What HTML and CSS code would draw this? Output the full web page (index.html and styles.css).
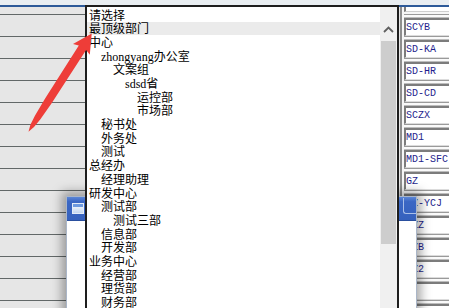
FILE: index.html
```html
<!DOCTYPE html>
<html>
  <head>
    <meta charset="UTF-8">
    <title>部门选择</title>
    <link rel="stylesheet" href="styles.css">
  </head>
  <body>
    <div id="screen">
      <div class="top-strip"></div>
      <div class="blue-line"></div>

      <div class="grid">
        <div class="row lead">
          <div class="cell-left"></div>
          <div class="cell-right"><div class="code-tail"></div></div>
        </div>
        <div class="row"><div class="cell-left"></div><div class="cell-right"><div class="groove"></div><div class="code">SCYB</div></div></div>
        <div class="row"><div class="cell-left"></div><div class="cell-right"><div class="groove"></div><div class="code">SD-KA</div></div></div>
        <div class="row"><div class="cell-left"></div><div class="cell-right"><div class="groove"></div><div class="code">SD-HR</div></div></div>
        <div class="row"><div class="cell-left"></div><div class="cell-right"><div class="groove"></div><div class="code">SD-CD</div></div></div>
        <div class="row"><div class="cell-left"></div><div class="cell-right"><div class="groove"></div><div class="code">SCZX</div></div></div>
        <div class="row"><div class="cell-left"></div><div class="cell-right"><div class="groove"></div><div class="code">MD1</div></div></div>
        <div class="row"><div class="cell-left"></div><div class="cell-right"><div class="groove"></div><div class="code">MD1-SFC</div></div></div>
        <div class="row"><div class="cell-left"></div><div class="cell-right"><div class="groove"></div><div class="code">GZ</div></div></div>
        <div class="row"><div class="cell-left"></div><div class="cell-right"><div class="groove"></div><div class="code">GZ-YCJ</div></div></div>
        <div class="row"><div class="cell-left"></div><div class="cell-right"><div class="groove"></div><div class="code">SZZ</div></div></div>
        <div class="row"><div class="cell-left"></div><div class="cell-right"><div class="groove"></div><div class="code">SZB</div></div></div>
        <div class="row"><div class="cell-left"></div><div class="cell-right"><div class="groove"></div><div class="code">SZ2</div></div></div>
        <div class="row"><div class="cell-left"></div><div class="cell-right"><div class="groove"></div><div class="code"></div></div></div>
        <div class="row"><div class="cell-left"></div><div class="cell-right"><div class="groove"></div><div class="code"></div></div></div>
      </div>

      <!-- dialog window lying under the open dropdown -->
      <div class="dialog">
        <div class="dialog-title">
          <div class="app-icon"><div class="app-icon-bar"></div></div>
          <div class="flex-grow-1"></div>
          <div class="title-btn"></div>
        </div>
        <div class="dialog-body"></div>
      </div>

      <!-- open select list -->
      <div class="dropdown">
        <ul class="dd-list">
          <li class="lvl0">请选择</li>
          <li class="lvl0 hover">最顶级部门</li>
          <li class="lvl0">中心</li>
          <li class="lvl1">zhongyang办公室</li>
          <li class="lvl2">文案组</li>
          <li class="lvl3">sdsd省</li>
          <li class="lvl4">运控部</li>
          <li class="lvl4">市场部</li>
          <li class="lvl1">秘书处</li>
          <li class="lvl1">外务处</li>
          <li class="lvl1">测试</li>
          <li class="lvl0">总经办</li>
          <li class="lvl1">经理助理</li>
          <li class="lvl0">研发中心</li>
          <li class="lvl1">测试部</li>
          <li class="lvl2">测试三部</li>
          <li class="lvl1">信息部</li>
          <li class="lvl1">开发部</li>
          <li class="lvl0">业务中心</li>
          <li class="lvl1">经营部</li>
          <li class="lvl1">理货部</li>
          <li class="lvl1">财务部</li>
        </ul>
        <div class="dd-scroll">
          <div class="scroll-up">
            <svg width="11" height="7" viewBox="0 0 11 7"><path d="M1 6 L5.5 1.5 L10 6" fill="none" stroke="#606060" stroke-width="1.8"/></svg>
          </div>
          <div class="scroll-thumb"></div>
        </div>
      </div>

      <!-- red annotation arrow -->
      <svg class="arrow" width="449" height="308" viewBox="0 0 449 308">
        <polygon fill="#ee3d38" points="91.7,33.4 89.8,54.8 86.1,50.1 51.8,102.9 40.4,119.3 34,127.1 28.5,131.8 30.4,124.8 34.9,115.8 45.1,98.6 78.8,45.4 73.0,44.0"/>
      </svg>
    </div>
  </body>
</html>
```
FILE: styles.css
```css
/* Variables */
:root {
	--panel-gray: #e6e6e6;
	--grid-line: #626868;
	--frame-dark: #1e1e1e;
	--title-blue: #3b67c4;
	--code-blue: #1e1e8c;
	--scroll-track: #f0f0f0;
	--scroll-thumb: #cdcdcd;
}

/* Resets */
* {
	margin: 0;
	padding: 0;
	box-sizing: border-box;
}

body {
	font-family: "Noto Sans CJK SC", sans-serif;
	background: var(--panel-gray);
	overflow: hidden;
}

.flex-grow-1 {
	flex-grow: 1;
}

#screen {
	position: relative;
	width: 449px;
	height: 308px;
	overflow: hidden;
	background: var(--panel-gray);
}

.top-strip {
	height: 5px;
	background: #e9eef2;
}

.blue-line {
	height: 2px;
	background: #2d5a99;
}

/* Table behind */
.row {
	display: flex;
	height: 22px;
}

.row.lead {
	height: 7px;
}

.cell-left {
	flex-grow: 1;
	border-top: 1px solid var(--grid-line);
}

.lead .cell-left {
	border-top: none;
}

.cell-right {
	width: 49px;
	margin-left: 1px;
	padding-left: 2px;
	border-left: 2px solid #8e8e8e;
	background: #f6f6f6;
	display: flex;
	flex-direction: column;
}

.code-tail {
	height: 5px;
	background: white;
	border-left: 2px solid #7c7c7c;
	border-bottom: 1px solid #cfcfcf;
}

.groove {
	height: 4px;
	border-top: 1px solid #9a9a9a;
	border-bottom: 1px solid #bdbdbd;
	background: #fafafa;
}

.code {
	height: 18px;
	background: white;
	border-style: solid;
	border-width: 2px 0 1px 2px;
	border-color: #7c7c7c #dcdcdc #dcdcdc #7c7c7c;
	font-family: "Liberation Mono", monospace;
	font-size: 10px;
	line-height: 15px;
	color: var(--code-blue);
	white-space: nowrap;
	overflow: hidden;
}

/* Dialog */
.dialog {
	position: absolute;
	left: 66px;
	top: 196px;
	width: 351px;
	height: 130px;
	border: 1px solid #aab6c8;
	background: white;
	box-shadow: 0 0 10px 4px rgba(0, 0, 0, 0.35);
}

.dialog-title {
	height: 24px;
	display: flex;
	align-items: flex-start;
	padding: 6px 0 0 5px;
	background: linear-gradient(#5b86d6, var(--title-blue) 20%, #3561bd);
	border-bottom: 1px solid #2a4f9e;
}

.app-icon {
	width: 12px;
	height: 11px;
	border: 1px solid #e4ecf8;
	background: linear-gradient(#ffffff, #c3d6f0);
}

.app-icon-bar {
	height: 3px;
	background: #6e9ae0;
}

.title-btn {
	width: 13px;
	height: 16px;
	margin-top: -5px;
	border-left: 1px solid #a9bfe8;
	border-bottom: 1px solid #a9bfe8;
	border-bottom-left-radius: 3px;
}

/* Dropdown */
.dropdown {
	position: absolute;
	left: 85px;
	top: 5px;
	width: 314px;
	height: 320px;
	display: flex;
	background: white;
	border: 2px solid var(--frame-dark);
	border-bottom: none;
}

.dd-list {
	flex-grow: 1;
	list-style: none;
	padding-top: 1px;
	font-family: "Liberation Serif", "Noto Sans CJK SC", serif;
	font-size: 12px;
	color: black;
}

.dd-list li {
	height: 13.7px;
	padding-top: 1.6px;
	line-height: 12px;
	white-space: nowrap;
}

.dd-list li.hover {
	background: #ebebeb;
}

.lvl0 { padding-left: 2px; }
.lvl1 { padding-left: 14px; }
.lvl2 { padding-left: 26px; }
.lvl3 { padding-left: 38px; }
.lvl4 { padding-left: 50px; }

.dd-scroll {
	width: 17px;
	background: var(--scroll-track);
	display: flex;
	flex-direction: column;
	align-items: center;
}

.scroll-up {
	height: 17px;
	margin-top: 14px;
	display: flex;
	align-items: center;
	justify-content: center;
}

.scroll-thumb {
	width: 15px;
	height: 203px;
	margin-top: 3px;
	background: var(--scroll-thumb);
}

/* Annotation */
.arrow {
	position: absolute;
	left: 0;
	top: 0;
	pointer-events: none;
}
```
